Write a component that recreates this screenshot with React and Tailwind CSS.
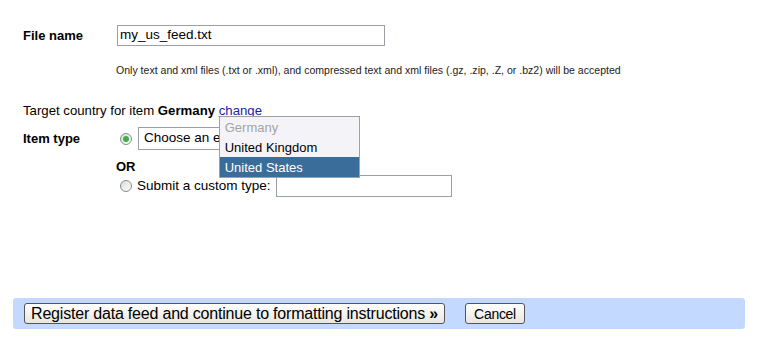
import React from 'react'

/**
 * Data feed registration form, with the country menu opened
 */
function Radio({ checked = false }) {
  return (
    <span className="relative inline-flex items-center justify-center w-[12px] h-[12px] rounded-full border border-[#7f8d99] bg-gradient-to-br from-[#dcdcd6] to-[#ffffff]">
      {checked && <span className="w-[6px] h-[6px] rounded-full bg-[#3fb03f]" />}
    </span>
  )
}

export default function App() {
  const countries = ['Germany', 'United Kingdom', 'United States']

  return (
    <div className="relative w-[764px] h-[348px] bg-white text-[13px] text-black font-['Liberation_Sans',Arial,sans-serif] overflow-hidden">
      {/* File name */}
      <div className="flex items-center pl-[23px] pt-[25px]">
        <div className="w-[94px] font-bold">File name</div>
        <div className="w-[268px] h-[21px] border border-[#9aa0a6] flex items-center pl-[2px] text-[13.5px]">
          my_us_feed.txt
        </div>
      </div>
      <p className="pl-[116px] mt-[18px] text-[10.55px] leading-[12px] text-[#222]">
        Only text and xml files (.txt or .xml), and compressed text and xml files (.gz, .zip, .Z, or .bz2) will be accepted
      </p>

      {/* Target country */}
      <div className="pl-[23px] mt-[27px] leading-[15px] text-[13.2px]">
        Target country for item <b>Germany</b>{' '}
        <span className="relative">
          <a className="text-[#1c1cb0] underline">change</a>
          {/* Open menu */}
          <div className="absolute left-[0px] top-[13px] w-[141px] border border-[#a0a0a0] bg-[#f4f4f8] z-10 text-[13px]">
            {countries.map((c, i) => (
              <div
                key={c}
                className={
                  i === 2
                    ? 'h-[20px] flex items-center pl-[5px] bg-[#3b6d9b] text-white'
                    : i === 0
                    ? 'h-[20px] flex items-center pl-[5px] text-[#a4a4a4]'
                    : 'h-[20px] flex items-center pl-[5px] text-black'
                }
              >
                {c}
              </div>
            ))}
          </div>
        </span>
      </div>

      {/* Item type */}
      <div className="flex pl-[23px] mt-[9px]">
        <div className="w-[97px] font-bold pt-[2px]">Item type</div>
        <div className="flex flex-col">
          <div className="flex items-center gap-[6px]">
            <Radio checked />
            <div className="w-[150px] h-[23px] border border-[#9aa0a6] flex items-center pl-[5px] text-[13.5px] whitespace-nowrap overflow-hidden">
              Choose an element
            </div>
          </div>
          <div className="font-bold -ml-[4px] mt-[9px] leading-[15px]">OR</div>
          <div className="flex items-center gap-[5px] mt-[1px]">
            <Radio />
            <span className="text-[13.5px]">Submit a custom type:</span>
            <div className="w-[176px] h-[22px] border border-[#9aa0a6]" />
          </div>
        </div>
      </div>

      {/* Action bar */}
      <div className="absolute left-[13px] top-[298px] w-[732px] h-[31px] rounded-[3px] bg-[#c3d9ff] flex items-center pl-[11px] gap-[20px]">
        <button className="h-[21px] w-[421px] rounded-[3px] border border-[#555] bg-gradient-to-b from-white to-[#e8e6de] text-[16px] tracking-[-0.2px] leading-none">
          Register data feed and continue to formatting instructions <b>»</b>
        </button>
        <button className="h-[21px] w-[60px] rounded-[3px] border border-[#555] bg-gradient-to-b from-white to-[#e8e6de] text-[14px] tracking-[-0.3px] leading-none">
          Cancel
        </button>
      </div>
    </div>
  )
}
